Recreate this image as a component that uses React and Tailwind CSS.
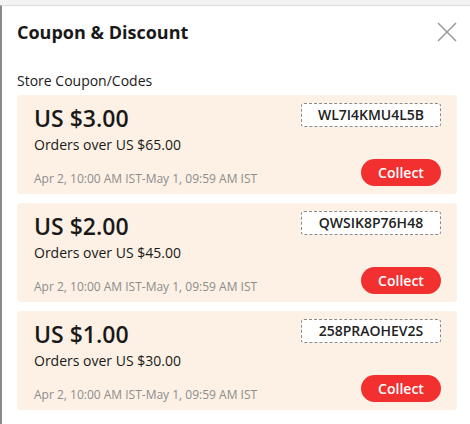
import React from 'react'

const coupons = [
  { amount: 'US $3.00', min: 'Orders over US $65.00', code: 'WL7I4KMU4L5B' },
  { amount: 'US $2.00', min: 'Orders over US $45.00', code: 'QWSIK8P76H48' },
  { amount: 'US $1.00', min: 'Orders over US $30.00', code: '258PRAOHEV2S' },
]

const CouponCard = ({ amount, min, code }) => {
  return (
    <div className="flex justify-between rounded bg-[#fdf1e5] pl-[17px] pr-4 pt-2 pb-[7px]">
      {/* left: value and terms */}
      <div className="flex flex-col">
        <div className="text-[23px] font-semibold leading-[30px] text-[#191919]">{amount}</div>
        <div className="text-[14px] leading-6 text-[#191919]">{min}</div>
        <div className="mt-[14px] text-[12px] leading-4 text-[#8c8c8c]">
          Apr 2, 10:00 AM IST-May 1, 09:59 AM IST
        </div>
      </div>
      {/* right: code and action */}
      <div className="flex flex-col items-end justify-between">
        <div className="h-6 w-[140px] rounded-[3px] border border-dashed border-[#8a8a8a] bg-white text-center text-[14px] font-semibold leading-[22px] text-[#222]">
          {code}
        </div>
        <button className="mb-px h-[27px] w-20 rounded-full bg-[#f23030] text-[14px] font-semibold text-white">
          Collect
        </button>
      </div>
    </div>
  )
}

const App = () => {
  return (
    <div
      className="h-[424px] w-[470px] overflow-hidden bg-[#f3f3f3] pt-[5px]"
      style={{ fontFamily: '"Open Sans", "Liberation Sans", sans-serif' }}
    >
      <div className="h-full border-l-2 border-t border-[#8a8a8a] border-t-[#dedede] bg-white pt-[14px] pl-[15px] pr-[13px]">
        <div className="flex items-start justify-between">
          <h1 className="text-[18px] font-bold leading-6 text-[#191919]">Coupon &amp; Discount</h1>
          <svg width="20" height="20" viewBox="0 0 20 20" className="mt-[2px]" fill="none">
            <path d="M1 1L19 19M19 1L1 19" stroke="#999" strokeWidth="1.5" />
          </svg>
        </div>
        <div className="mt-[27px] text-[14px] leading-5 text-[#191919]">Store Coupon/Codes</div>
        <div className="mt-1 flex flex-col gap-[9px]">
          {coupons.map((c) => (
            <CouponCard key={c.code} {...c} />
          ))}
        </div>
      </div>
    </div>
  )
}

export default App
